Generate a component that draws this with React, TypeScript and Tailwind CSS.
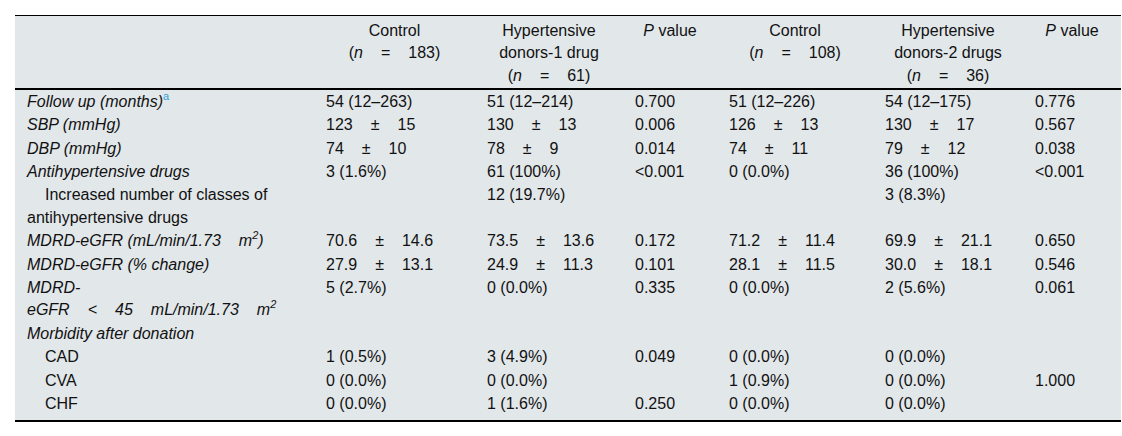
import type { ReactNode } from "react";

type Cell = string | [string, string];

interface Row {
    label: ReactNode;
    indent?: boolean;
    cells: Cell[];
}

// wide non-breaking gap used throughout the source table
const Sp = () => <span className="inline-block w-[18px]" />;

const Sup = ({ children, blue }: { children: ReactNode; blue?: boolean }) => (
    <sup className={`text-[11px] top-[-7px] ${blue ? "not-italic text-[#2f9fdc]" : ""}`}>{children}</sup>
);

const Pm = ({ a, b }: { a: string; b: string }) => (
    <span className="whitespace-nowrap">
        {a}
        <Sp />±<Sp />
        {b}
    </span>
);

const N = ({ n }: { n: string }) => (
    <span className="whitespace-nowrap">
        (<i>n</i>
        <Sp />=<Sp />
        {n})
    </span>
);

const rows: Row[] = [
    {
        label: (
            <i>
                Follow up (months)<Sup blue>a</Sup>
            </i>
        ),
        cells: ["54 (12–263)", "51 (12–214)", "0.700", "51 (12–226)", "54 (12–175)", "0.776"],
    },
    {
        label: <i>SBP (mmHg)</i>,
        cells: [["123", "15"], ["130", "13"], "0.006", ["126", "13"], ["130", "17"], "0.567"],
    },
    {
        label: <i>DBP (mmHg)</i>,
        cells: [["74", "10"], ["78", "9"], "0.014", ["74", "11"], ["79", "12"], "0.038"],
    },
    {
        label: <i>Antihypertensive drugs</i>,
        cells: ["3 (1.6%)", "61 (100%)", "<0.001", "0 (0.0%)", "36 (100%)", "<0.001"],
    },
    {
        label: "Increased number of classes of antihypertensive drugs",
        indent: true,
        cells: ["", "12 (19.7%)", "", "", "3 (8.3%)", ""],
    },
    {
        label: (
            <i>
                MDRD-eGFR (mL/min/1.73
                <Sp />m<Sup>2</Sup>)
            </i>
        ),
        cells: [["70.6", "14.6"], ["73.5", "13.6"], "0.172", ["71.2", "11.4"], ["69.9", "21.1"], "0.650"],
    },
    {
        label: <i>MDRD-eGFR (% change)</i>,
        cells: [["27.9", "13.1"], ["24.9", "11.3"], "0.101", ["28.1", "11.5"], ["30.0", "18.1"], "0.546"],
    },
    {
        label: (
            <i>
                MDRD-
                <span className="whitespace-nowrap">
                    eGFR<Sp />&lt;<Sp />45<Sp />mL/min/1.73<Sp />m<Sup>2</Sup>
                </span>
            </i>
        ),
        cells: ["5 (2.7%)", "0 (0.0%)", "0.335", "0 (0.0%)", "2 (5.6%)", "0.061"],
    },
    {
        label: <i>Morbidity after donation</i>,
        cells: ["", "", "", "", "", ""],
    },
    {
        label: "CAD",
        indent: true,
        cells: ["1 (0.5%)", "3 (4.9%)", "0.049", "0 (0.0%)", "0 (0.0%)", ""],
    },
    {
        label: "CVA",
        indent: true,
        cells: ["0 (0.0%)", "0 (0.0%)", "", "1 (0.9%)", "0 (0.0%)", "1.000"],
    },
    {
        label: "CHF",
        indent: true,
        cells: ["0 (0.0%)", "1 (1.6%)", "0.250", "0 (0.0%)", "0 (0.0%)", ""],
    },
];

const PValue = () => (
    <>
        <i>P</i> value
    </>
);

const th = "px-3 pt-[4px] pb-[1px] font-normal text-center align-top";

export default function App() {
    return (
        <div className="bg-white w-[1122px] h-[436px] pt-[15px] pl-[15px] font-['Liberation_Sans',Arial,sans-serif] text-[16px] leading-[22.4px] text-[#111]">
            <table className="table-fixed border-collapse w-[1106px] bg-[#e2e7ea]">
                <colgroup>
                    <col className="w-[299px]" />
                    <col className="w-[161px]" />
                    <col className="w-[148px]" />
                    <col className="w-[94px]" />
                    <col className="w-[156px]" />
                    <col className="w-[150px]" />
                    <col className="w-[98px]" />
                </colgroup>
                <thead>
                    <tr className="border-t border-black border-b-2">
                        <th className={th} />
                        <th className={th}>
                            <div>Control</div>
                            <div><N n="183" /></div>
                        </th>
                        <th className={th}>
                            <div>Hypertensive</div>
                            <div>donors-1 drug</div>
                            <div><N n="61" /></div>
                        </th>
                        <th className={th}>
                            <PValue />
                        </th>
                        <th className={th}>
                            <div>Control</div>
                            <div><N n="108" /></div>
                        </th>
                        <th className={th}>
                            <div>Hypertensive</div>
                            <div className="whitespace-nowrap">donors-2 drugs</div>
                            <div><N n="36" /></div>
                        </th>
                        <th className={th}>
                            <PValue />
                        </th>
                    </tr>
                </thead>
                <tbody className="border-b-2 border-black">
                    {rows.map((row, i) => {
                        const last = i === rows.length - 1;
                        return (
                            <tr key={i}>
                                <td
                                    className={`pl-3 pr-2 pt-[0.5px] align-top ${last ? "pb-[5px]" : "pb-[0.5px]"} ${row.indent ? "indent-[18px]" : ""}`}
                                >
                                    {row.label}
                                </td>
                                {row.cells.map((c, j) => (
                                    <td
                                        key={j}
                                        className={`px-3 pt-[0.5px] align-top whitespace-nowrap ${last ? "pb-[5px]" : "pb-[0.5px]"}`}
                                    >
                                        {Array.isArray(c) ? <Pm a={c[0]} b={c[1]} /> : c}
                                    </td>
                                ))}
                            </tr>
                        );
                    })}
                </tbody>
            </table>
        </div>
    );
}
